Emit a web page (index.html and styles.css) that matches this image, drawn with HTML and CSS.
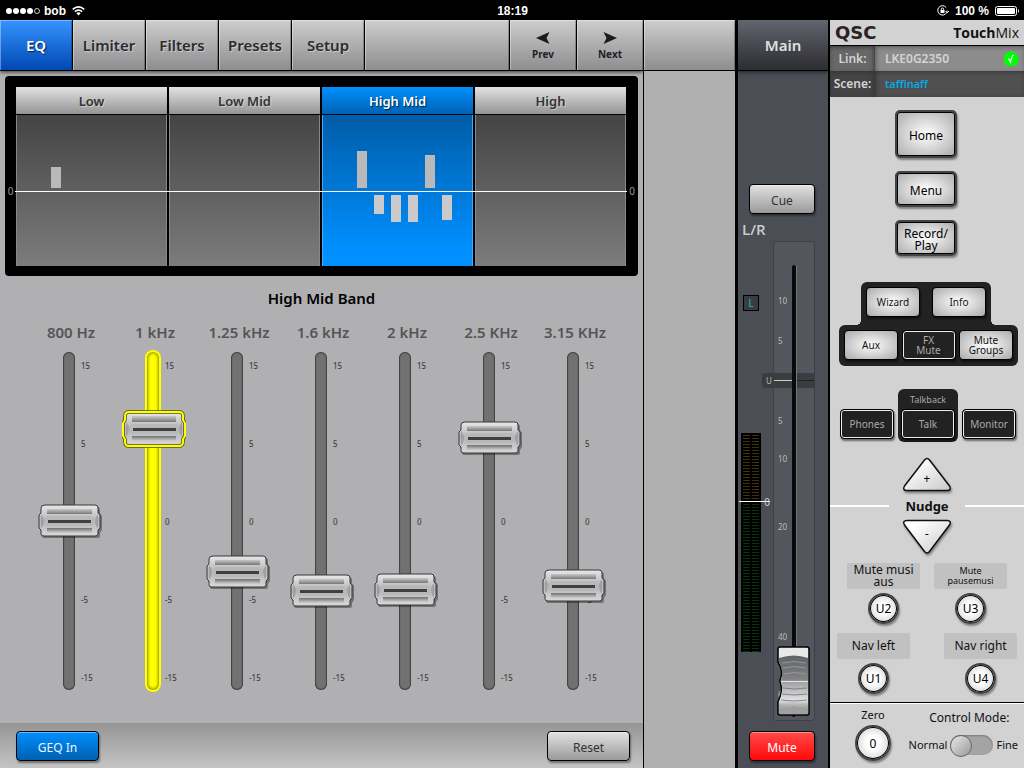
FILE: index.html
```
<!DOCTYPE html>
<html lang="en">
<head>
    <meta charset="UTF-8">
    <meta name="viewport" content="width=device-width, initial-scale=1.0">
    <title>TouchMix Control</title>
    <link rel="stylesheet" href="styles.css">
</head>
<body>

    <!-- Status Bar -->
    <header class="status">
        <div class="status-left">
            <svg width="35" height="8" viewBox="0 0 35 8" fill="#fff"><circle cx="4" cy="4" r="3"/><circle cx="11" cy="4" r="3"/><circle cx="18" cy="4" r="3"/><circle cx="25" cy="4" r="3"/><circle cx="32" cy="4" r="2.5" fill="none" stroke="#fff" stroke-width="0.8"/></svg>
            <span>bob</span>
            <svg class="wifi" width="13" height="10" viewBox="0 0 13 10" fill="none" stroke="#fff" stroke-width="1.6"><path d="M0.7 3.3Q6.5 -1.6 12.3 3.3M2.8 5.6Q6.5 2.5 10.2 5.6"/><path d="M4.3 7.2Q6.5 5.4 8.7 7.2L6.5 9.6Z" fill="#fff" stroke="none"/></svg>
        </div>
        <span class="clock">18:19</span>
        <div class="status-right">
            <svg width="12" height="12" viewBox="0 0 12 12" fill="none" stroke="#fff"><path d="M9.2 2.5A4.7 4.7 0 1 0 10.2 5.5M8.5 6L10.2 7.8L11.8 6"/><rect x="3.5" y="5" width="4" height="3" fill="#fff" stroke="none"/><path d="M4.3 5.2V4.2A1.2 1.2 0 0 1 6.7 4.2V5.2"/></svg>
            <span>100 %</span>
            <svg width="25" height="10" viewBox="0 0 25 10"><rect x="0.5" y="0.5" width="21" height="9" rx="2" fill="none" stroke="#fff"/><rect x="2" y="2" width="18" height="6" rx="1" fill="#fff"/><path d="M23 3Q25 5 23 7Z" fill="#fff"/></svg>
        </div>
    </header>

    <div class="mixer">

        <!-- EQ Page -->
        <main class="eq">
            <nav class="tabs">
                <button class="tab active">EQ</button>
                <button class="tab">Limiter</button>
                <button class="tab">Filters</button>
                <button class="tab">Presets</button>
                <button class="tab">Setup</button>
                <span class="tab-fill"></span>
                <button class="step"><svg width="14" height="12" viewBox="0 0 14 12"><path d="M0 6L13.5 0L10.5 6L13.5 12Z"/></svg>Prev</button>
                <button class="step"><svg width="14" height="12" viewBox="0 0 14 12"><path d="M14 6L0.5 0L3.5 6L0.5 12Z"/></svg>Next</button>
            </nav>

            <section class="graph">
                <span class="zero-mark">0</span>
                <div class="bands">
                    <div class="band">
                        <button class="band-name">Low</button>
                        <div class="band-plot">
                            <i class="bar"></i>
                            <i class="bar up" style="height: 21px"></i>
                        </div>
                    </div>
                    <div class="band">
                        <button class="band-name">Low Mid</button>
                        <div class="band-plot"></div>
                    </div>
                    <div class="band active">
                        <button class="band-name">High Mid</button>
                        <div class="band-plot">
                            <i class="bar"></i>
                            <i class="bar up" style="height: 37px"></i>
                            <i class="bar down" style="height: 19px"></i>
                            <i class="bar down" style="height: 27px"></i>
                            <i class="bar down" style="height: 27px"></i>
                            <i class="bar up" style="height: 33px"></i>
                            <i class="bar down" style="height: 25px"></i>
                        </div>
                    </div>
                    <div class="band">
                        <button class="band-name">High</button>
                        <div class="band-plot"></div>
                    </div>
                    <div class="zero-line"></div>
                </div>
                <span class="zero-mark">0</span>
            </section>

            <h2 class="band-title">High Mid Band</h2>

            <section class="faders">
                <div class="fader">
                    <label for="f800">800 Hz</label>
                    <div class="fader-body">
                        <input type="range" id="f800" min="-15" max="15" step="0.1" value="0">
                        <div class="scale"><span>15</span><span>5</span><span>0</span><span>-5</span><span>-15</span></div>
                    </div>
                </div>
                <div class="fader selected">
                    <label for="f1k">1 kHz</label>
                    <div class="fader-body">
                        <input type="range" id="f1k" min="-15" max="15" step="0.1" value="9.2">
                        <div class="scale"><span>15</span><span>5</span><span>0</span><span>-5</span><span>-15</span></div>
                    </div>
                </div>
                <div class="fader">
                    <label for="f1k25">1.25 kHz</label>
                    <div class="fader-body">
                        <input type="range" id="f1k25" min="-15" max="15" step="0.1" value="-5.1">
                        <div class="scale"><span>15</span><span>5</span><span>0</span><span>-5</span><span>-15</span></div>
                    </div>
                </div>
                <div class="fader">
                    <label for="f1k6">1.6 kHz</label>
                    <div class="fader-body">
                        <input type="range" id="f1k6" min="-15" max="15" step="0.1" value="-7">
                        <div class="scale"><span>15</span><span>5</span><span>0</span><span>-5</span><span>-15</span></div>
                    </div>
                </div>
                <div class="fader">
                    <label for="f2k">2 kHz</label>
                    <div class="fader-body">
                        <input type="range" id="f2k" min="-15" max="15" step="0.1" value="-6.9">
                        <div class="scale"><span>15</span><span>5</span><span>0</span><span>-5</span><span>-15</span></div>
                    </div>
                </div>
                <div class="fader">
                    <label for="f2k5">2.5 KHz</label>
                    <div class="fader-body">
                        <input type="range" id="f2k5" min="-15" max="15" step="0.1" value="8.3">
                        <div class="scale"><span>15</span><span>5</span><span>0</span><span>-5</span><span>-15</span></div>
                    </div>
                </div>
                <div class="fader">
                    <label for="f3k15">3.15 KHz</label>
                    <div class="fader-body">
                        <input type="range" id="f3k15" min="-15" max="15" step="0.1" value="-6.5">
                        <div class="scale"><span>15</span><span>5</span><span>0</span><span>-5</span><span>-15</span></div>
                    </div>
                </div>
            </section>

            <footer class="eq-footer">
                <button class="btn wide blue">GEQ In</button>
                <button class="btn wide">Reset</button>
            </footer>
        </main>

        <div class="spare"><div class="spare-head"></div></div>

        <!-- Main Output Strip -->
        <section class="strip">
            <h2 class="strip-head">Main</h2>
            <div class="strip-body">
                <button class="btn">Cue</button>
                <label class="strip-name" for="main-level">L/R</label>
                <div class="strip-level">
                    <div class="meter-col">
                        <button class="link-l">L</button>
                        <div class="meter"><span class="meter-zero">0</span></div>
                    </div>
                    <div class="slot">
                        <span class="mark" style="top: 59px">10</span>
                        <span class="mark" style="top: 99px">5</span>
                        <span class="mark" style="top: 179px">5</span>
                        <span class="mark" style="top: 217px">10</span>
                        <span class="mark" style="top: 285px">20</span>
                        <span class="mark" style="top: 395px">40</span>
                        <span class="mark" style="top: 453px">60</span>
                        <span class="unity">U</span>
                        <input type="range" id="main-level" min="0" max="100" value="0">
                    </div>
                </div>
                <button class="btn red">Mute</button>
            </div>
        </section>

        <!-- Side Panel -->
        <aside class="side">
            <div class="brand">
                <span class="logo">QSC</span>
                <span class="product"><b>Touch</b>Mix</span>
            </div>
            <div class="info">
                <span class="info-name">Link:</span>
                <span class="info-value">LKE0G2350
                    <svg width="16" height="16" viewBox="0 0 16 16"><circle cx="8" cy="8" r="7.5" fill="#0f0"/><path d="M5 8.5L6 8L7.3 11.5L9.5 4.5H11" fill="none" stroke="#e8ffe8" stroke-width="1.2"/></svg>
                </span>
            </div>
            <div class="info dark">
                <span class="info-name">Scene:</span>
                <span class="info-value scene">taffinaff</span>
            </div>

            <div class="nav-keys">
                <button class="key tall">Home</button>
                <button class="key">Menu</button>
                <button class="key">Record/<br>Play</button>
            </div>

            <div class="cluster">
                <div class="cluster-top">
                    <button class="pad lit">Wizard</button>
                    <button class="pad lit">Info</button>
                </div>
                <div class="cluster-bottom">
                    <button class="pad lit">Aux</button>
                    <button class="pad">FX<br>Mute</button>
                    <button class="pad lit">Mute<br>Groups</button>
                </div>
            </div>

            <div class="talk-row">
                <button class="pad">Phones</button>
                <div class="talkback">
                    <span>Talkback</span>
                    <button class="pad">Talk</button>
                </div>
                <button class="pad">Monitor</button>
            </div>

            <div class="nudge">
                <button class="nudge-btn">
                    <svg width="50" height="36" viewBox="0 0 50 36"><path d="M22.5 3Q25 0 27.5 3L47.5 29Q50 33.500 45 33.500H5Q0 33.500 2.500 29Z" fill="url(#shine)" stroke="#111" stroke-width="1.500"/></svg>
                    <span class="plus">+</span>
                </button>
                <h3 class="nudge-title">Nudge</h3>
                <button class="nudge-btn">
                    <svg width="50" height="36" viewBox="0 0 50 36"><path d="M22.5 32.500Q25 35.500 27.5 32.500L47.5 6Q50 1.500 45 1.500H5Q0 1.500 2.500 6Z" fill="url(#shine)" stroke="#111" stroke-width="1.500"/></svg>
                    <span class="minus">-</span>
                </button>
                <svg class="defs" width="0" height="0"><defs><linearGradient id="shine" x1="0" y1="0" x2="1" y2="1"><stop offset="0.2" stop-color="#fff"/><stop offset="1" stop-color="#c8c8c8"/></linearGradient></defs></svg>
            </div>

            <div class="user-keys">
                <div class="user"><label for="u2">Mute musi<br>aus</label><button class="round" id="u2">U2</button></div>
                <div class="user"><label class="small" for="u3">Mute<br>pausemusi</label><button class="round" id="u3">U3</button></div>
            </div>
            <div class="user-keys spread">
                <div class="user"><label for="u1">Nav left</label><button class="round" id="u1">U1</button></div>
                <div class="user"><label for="u4">Nav right</label><button class="round" id="u4">U4</button></div>
            </div>

            <div class="side-footer">
                <div class="zero">
                    <label for="zero">Zero</label>
                    <button class="round big" id="zero">0</button>
                </div>
                <div class="mode">
                    <label for="mode">Control Mode:</label>
                    <div class="mode-row">
                        <span>Normal</span>
                        <input type="checkbox" id="mode" class="switch">
                        <span>Fine</span>
                    </div>
                </div>
            </div>
        </aside>
    </div>

</body>
</html>
```
FILE: styles.css
```
/* Basic Styling */
* {
    box-sizing: border-box;
}

body {
    margin: 0;
    min-height: 100vh;
    display: flex;
    flex-direction: column;
    font-family: "Noto Sans", sans-serif;
    font-size: 12px;
    color: #111;
    background-color: #000;
}

button {
    font-family: inherit;
    padding: 0;
    border: none;
    cursor: pointer;
}

h2, h3 {
    margin: 0;
}

/* Status Bar */
.status {
    display: grid;
    grid-template-columns: 1fr auto 1fr;
    align-items: center;
    height: 20px;
    padding: 2px 4px 0 5px;
    font-family: "Liberation Sans", Arial, sans-serif;
    font-size: 12px;
    font-weight: bold;
    color: #fff;
}

.status-left, .status-right {
    display: flex;
    align-items: center;
    gap: 4px;
}

.status-right {
    justify-content: flex-end;
    gap: 6px;
}

.wifi {
    margin-left: 2px;
}

.mixer {
    flex: 1;
    display: grid;
    grid-template-columns: 1fr 92px 95px 194px;
}

/* EQ Page */
.eq {
    display: flex;
    flex-direction: column;
    background-color: #b0b0b2;
}

.tabs {
    display: flex;
    gap: 1px;
    height: 51px;
    border-bottom: 1px solid #000;
    background-color: #000;
    box-shadow: 0 1px 4px rgba(0, 0, 0, 0.7);
}

.tab, .step, .tab-fill, .spare-head {
    background: linear-gradient(#cdcdcd, #8e8e90);
    box-shadow: inset 1px 1px 0 rgba(255, 255, 255, 0.35), inset -1px 0 0 rgba(0, 0, 0, 0.25);
}

.tab {
    width: 72px;
    font-size: 15px;
    font-weight: 600;
    color: #2c2c2e;
    text-shadow: 1px 1px 0 rgba(255, 255, 255, 0.4);
}

.tab.active {
    color: #fff;
    background: linear-gradient(#3694ff, #0048b4);
    text-shadow: 1px 1px 1px #002050;
}

.tab-fill {
    flex: 1;
}

.step {
    width: 66px;
    display: flex;
    flex-direction: column;
    align-items: center;
    justify-content: center;
    gap: 3px;
    padding-top: 2px;
    font-size: 10px;
    font-weight: bold;
    color: #222;
}

.step svg {
    fill: #1c1c20;
}

/* Band Graph */
.graph {
    display: grid;
    grid-template-columns: 11px 1fr 12px;
    align-items: center;
    height: 200px;
    margin: 5px 5px 0;
    border-radius: 4px;
    background-color: #000;
}

.zero-mark {
    padding-top: 30px;
    text-align: center;
    font-size: 10px;
    color: #999;
}

.bands {
    position: relative;
    display: grid;
    grid-template-columns: repeat(4, 1fr);
    gap: 2px;
}

.band {
    display: flex;
    flex-direction: column;
    gap: 1px;
}

.band-name {
    height: 27px;
    padding-top: 2px;
    font-size: 13px;
    font-weight: 600;
    color: #333;
    background: linear-gradient(#e2e2e2, #949494);
    text-shadow: 1px 1px 0 rgba(255, 255, 255, 0.4);
}

.band-plot {
    display: flex;
    gap: 7px;
    height: 151px;
    padding-left: 18px;
    background: linear-gradient(#444, #7c7c7c);
    box-shadow: inset 1px 0 0 #888, inset -1px 0 0 #888;
}

.band.active .band-name {
    color: #fff;
    background: linear-gradient(#0090ff, #0062b4);
    text-shadow: 1px 1px 1px #002050;
}

.band.active .band-plot {
    background: linear-gradient(#005ca8, #0090ff 90%);
    box-shadow: inset 1px 0 0 #48a8f8, inset -1px 0 0 #48a8f8;
}

.bar {
    width: 10px;
}

.bar.up {
    align-self: flex-end;
    margin-bottom: 78px;
    background: #b9b9bc;
}

.bar.down {
    margin-top: 80px;
    background: #cacacc;
}

.zero-line {
    position: absolute;
    top: 104px;
    left: -1px;
    right: -1px;
    height: 1px;
    background-color: #fff;
}

.band-title {
    margin-top: 12px;
    line-height: 20px;
    text-align: center;
    font-size: 15px;
    font-weight: 600;
    color: #000;
}

/* Faders */
.faders {
    flex: 1;
    display: grid;
    grid-template-columns: repeat(7, 1fr);
    padding: 14px 28px 0 27px;
}

.fader {
    display: flex;
    flex-direction: column;
    align-items: center;
    gap: 10px;
}

.fader label {
    padding-left: 4px;
    line-height: 20px;
    white-space: nowrap;
    font-size: 15px;
    font-weight: 600;
    color: #555;
}

.fader-body {
    display: grid;
    grid-template-columns: 1fr 64px 1fr;
}

.fader-body input {
    grid-area: 1 / 2;
    z-index: 1;
}

.scale {
    grid-area: 1 / 2;
    display: flex;
    flex-direction: column;
    justify-content: space-between;
    padding: 8px 0 6px 44px;
    line-height: 12px;
    font-size: 8px;
    font-weight: 500;
    color: #444;
}

input[type="range"] {
    -webkit-appearance: none;
    appearance: none;
    writing-mode: vertical-lr;
    direction: rtl;
    width: 64px;
    height: 338px;
    margin: 0;
    background: none;
}

.fader input::-webkit-slider-runnable-track {
    width: 12px;
    height: 100%;
    border-radius: 6px;
    background: #717171;
    box-shadow: inset 0 0 1px 1px #404040;
}

.fader input::-webkit-slider-thumb {
    -webkit-appearance: none;
    width: 64px;
    height: 38px;
    margin-left: -25px;
    background: url("data:image/svg+xml,%3Csvg xmlns='http://www.w3.org/2000/svg' width='64' height='38'%3E%3Cdefs%3E%3ClinearGradient id='a' x2='0' y2='1'%3E%3Cstop stop-color='%23e8e8ea'/%3E%3Cstop offset='.5' stop-color='%23b4b4b6'/%3E%3Cstop offset='1' stop-color='%23d8d8da'/%3E%3C/linearGradient%3E%3ClinearGradient id='b' x2='0' y2='1'%3E%3Cstop stop-color='%23c8c8ca'/%3E%3Cstop offset='1' stop-color='%23777'/%3E%3C/linearGradient%3E%3ClinearGradient id='c' x2='0' y2='1'%3E%3Cstop stop-color='%23707070'/%3E%3Cstop offset='1' stop-color='%23d0d0d2'/%3E%3C/linearGradient%3E%3C/defs%3E%3Cpath d='M7 5H59Q62 5 62 8V11L64 14V28L62 31V34Q62 36 59 36H7Q4 36 4 34V31L2 28V14L4 11V8Q4 5 7 5Z' fill='%23000' opacity='.35'/%3E%3Cpath d='M7 3H57Q60 3 60 6V11L62 13V26L60 28V32Q60 34 57 34H6Q3 34 3 32V28L1 26V13L3 11V6Q3 3 7 3Z' fill='url(%23a)' stroke='%23383838'/%3E%3Cpath d='M3 12Q9 19 3 27ZM60 12Q54 19 60 27Z' fill='%23a0a0a2'/%3E%3Crect x='9' y='7' width='45' height='5' fill='url(%23b)'/%3E%3Crect x='9' y='26' width='45' height='5' fill='url(%23c)'/%3E%3Cpath d='M9 14H54L57 19L54 24H9L6 19Z' fill='%23b8b8ba'/%3E%3Crect x='10' y='18' width='43' height='3' fill='%23404040'/%3E%3C/svg%3E") no-repeat;
}

.fader.selected input::-webkit-slider-runnable-track {
    background: #ff0;
    box-shadow: 0 0 0 2px #ff0, inset 0 0 3px 1px #8a8a00;
}

.fader.selected input::-webkit-slider-thumb {
    background: url("data:image/svg+xml,%3Csvg xmlns='http://www.w3.org/2000/svg' width='64' height='38'%3E%3Cdefs%3E%3ClinearGradient id='a' x2='0' y2='1'%3E%3Cstop stop-color='%23e8e8ea'/%3E%3Cstop offset='.5' stop-color='%23b4b4b6'/%3E%3Cstop offset='1' stop-color='%23d8d8da'/%3E%3C/linearGradient%3E%3ClinearGradient id='b' x2='0' y2='1'%3E%3Cstop stop-color='%23c8c8ca'/%3E%3Cstop offset='1' stop-color='%23777'/%3E%3C/linearGradient%3E%3ClinearGradient id='c' x2='0' y2='1'%3E%3Cstop stop-color='%23707070'/%3E%3Cstop offset='1' stop-color='%23d0d0d2'/%3E%3C/linearGradient%3E%3C/defs%3E%3Cpath d='M7 2H57Q61 2 61 6V10L63 13V26L61 29V32Q61 36 57 36H7Q3 36 3 32V29L1 26V13L3 10V6Q3 2 7 2Z' fill='url(%23a)' stroke='%23555500' stroke-width='3.5'/%3E%3Cpath d='M7 2H57Q61 2 61 6V10L63 13V26L61 29V32Q61 36 57 36H7Q3 36 3 32V29L1 26V13L3 10V6Q3 2 7 2Z' fill='none' stroke='%23ff0' stroke-width='2'/%3E%3Cpath d='M4 12Q10 19 4 27ZM60 12Q54 19 60 27Z' fill='%23a0a0a2'/%3E%3Crect x='10' y='6' width='44' height='6' fill='url(%23b)'/%3E%3Crect x='10' y='26' width='44' height='5' fill='url(%23c)'/%3E%3Cpath d='M10 14H54L57 19L54 24H10L7 19Z' fill='%23b8b8ba'/%3E%3Crect x='11' y='18' width='43' height='3' fill='%23404040'/%3E%3C/svg%3E") no-repeat;
}

.eq-footer {
    display: flex;
    justify-content: space-between;
    align-items: flex-start;
    height: 45px;
    padding: 8px 13px 0 16px;
    background: linear-gradient(#959595, #c4c4c4);
}

/* Buttons */
.btn {
    height: 30px;
    width: 66px;
    padding-top: 2px;
    border: 1px solid #000;
    border-radius: 4px;
    font-size: 12px;
    color: #333;
    background: linear-gradient(#e2e2e2, #9a9a9a);
    box-shadow: inset 0 1px 0 rgba(255, 255, 255, 0.4), 1px 2px 2px rgba(0, 0, 0, 0.4);
}

.btn.wide {
    width: 83px;
}

.btn.blue {
    color: #e8f4ff;
    background: linear-gradient(#0090ff, #0060b0);
}

.btn.red {
    color: #fff;
    background: linear-gradient(#ff4a4a, #ff0a0a);
}

/* Spare Column */
.spare {
    border-left: 1px solid #000;
    background-color: #b0b0b0;
}

.spare-head {
    height: 51px;
    border-bottom: 1px solid #000;
}

/* Main Output Strip */
.strip {
    display: flex;
    flex-direction: column;
    border-left: 3px solid #000;
    border-right: 2px solid #000;
    background-color: #4b4e55;
}

.strip-head {
    height: 51px;
    border-bottom: 1px solid #000;
    line-height: 50px;
    text-align: center;
    font-size: 15px;
    font-weight: 600;
    color: #e0e0e0;
    background: linear-gradient(#62656e, #2c2d31);
    box-shadow: 0 1px 4px rgba(0, 0, 0, 0.6);
}

.strip-body {
    flex: 1;
    display: flex;
    flex-direction: column;
    justify-content: flex-end;
    align-items: center;
    padding: 0 13px 7px 3px;
}

.strip-body .btn {
    margin-left: 8px;
}

.strip-name {
    align-self: flex-start;
    margin-top: 5px;
    line-height: 20px;
    padding-left: 1px;
    font-family: "Open Sans", sans-serif;
    font-size: 15px;
    font-weight: 600;
    color: #ccc;
}

.strip-level {
    align-self: stretch;
    display: grid;
    grid-template-columns: 32px 1fr;
    height: 480px;
    margin: 2px 0 10px;
}

.link-l {
    display: block;
    width: 16px;
    height: 16px;
    margin: 54px 0 122px 2px;
    border: 1px solid #000;
    line-height: 12px;
    font-size: 10px;
    color: #1cb8cc;
    background-color: #3a3c40;
}

.meter {
    position: relative;
    width: 20px;
    height: 219px;
    background:
        linear-gradient(90deg, #000 2px, transparent 2px 9px, #000 9px 11px, transparent 11px 18px, #000 18px),
        repeating-linear-gradient(#000 0 2px, transparent 2px 3px),
        linear-gradient(#42340a 68px, #083410 68px);
}

.meter-zero {
    position: absolute;
    top: 68px;
    left: -2px;
    width: 31px;
    border-top: 1px solid #fff;
    text-align: right;
    line-height: 0;
    font-size: 10px;
    color: #ccc;
}

.slot {
    position: relative;
    padding-top: 23px;
    border: 1px solid #3e4046;
    border-radius: 3px;
    background-color: #53565d;
}

.slot input {
    position: relative;
    display: block;
    width: 40px;
    height: 452px;
}

.slot input::-webkit-slider-runnable-track {
    width: 4px;
    height: 100%;
    border-radius: 2px;
    background: #0a0a0a;
    box-shadow: 1px 0 0 #777;
}

.slot input::-webkit-slider-thumb {
    -webkit-appearance: none;
    width: 34px;
    height: 71px;
    margin-left: -15px;
    background: url("data:image/svg+xml,%3Csvg xmlns='http://www.w3.org/2000/svg' width='34' height='71'%3E%3Cdefs%3E%3ClinearGradient id='a' x2='0' y2='1'%3E%3Cstop stop-color='%23606468'/%3E%3Cstop offset='.45' stop-color='%23808284'/%3E%3Cstop offset='.5' stop-color='%23a0a0a2'/%3E%3Cstop offset='.85' stop-color='%23e0e0e2'/%3E%3Cstop offset='1' stop-color='%23999'/%3E%3C/linearGradient%3E%3C/defs%3E%3Cpath d='M3 1H30Q32 1 32 3V67Q32 69 30 69H3Q1 69 1 67V56Q7 44 3 36V34Q7 26 1 16V3Q1 1 3 1Z' fill='%23e8e8e8' stroke='%23000' stroke-width='1.5'/%3E%3Cpath d='M2 12Q17 7 31 12V62Q17 58 2 62V56Q7 44 4 36V34Q7 26 2 16Z' fill='url(%23a)'/%3E%3Cpath d='M2 62Q17 58 31 62V68H2Z' fill='%23a0a0a0'/%3E%3Cpath d='M5 17Q17 14 29 17M6 22Q17 19 29 22M7 28Q17 25 29 28' fill='none' stroke='%23a0a2a4' stroke-width='.8'/%3E%3Cpath d='M4 35.5H31' stroke='%23e4e4e4'/%3E%3Cpath d='M6 42Q17 44 30 42M5 48Q17 50 30 48M4 54Q17 56 30 54' fill='none' stroke='%23707274' stroke-width='.8'/%3E%3C/svg%3E") no-repeat;
}

.mark {
    position: absolute;
    left: 4px;
    line-height: 0;
    font-size: 8px;
    color: #bbb;
}

.unity {
    position: absolute;
    top: 131px;
    left: -12px;
    right: -1px;
    height: 15px;
    padding-left: 4px;
    border-radius: 3px;
    line-height: 15px;
    font-size: 8px;
    color: #bbb;
    background: linear-gradient(#ccc, #ccc) 12px 7px / 19px 1px no-repeat, linear-gradient(#222, #222) 31px 7px / 21px 1px no-repeat, #3a3c40;
}

/* Side Panel */
.side {
    display: flex;
    flex-direction: column;
    background-color: #d2d2d2;
}

.brand {
    display: flex;
    justify-content: space-between;
    align-items: center;
    height: 26px;
    padding: 0 5px;
    border-bottom: 1px solid #000;
}

.logo {
    font-family: "DejaVu Sans", sans-serif;
    font-size: 18px;
    font-weight: bold;
    line-height: 24px;
    color: #2a2226;
}

.product {
    font-family: "Open Sans", sans-serif;
    font-size: 14px;
}

.info {
    display: grid;
    grid-template-columns: 45px 1fr;
    height: 25px;
    border-bottom: 1px solid #000;
    line-height: 26px;
    font-size: 12px;
    font-weight: 600;
    color: #d4d4d4;
}

.info-name {
    text-align: center;
    background-color: #686868;
    box-shadow: inset -1px 1px 4px #333;
}

.info-value {
    display: flex;
    justify-content: space-between;
    align-items: center;
    padding: 0 5px 0 10px;
    background-color: #8c8c8c;
    box-shadow: inset 1px 1px 4px #555;
}

.info.dark .info-name {
    background-color: #444;
}

.info.dark .info-value {
    font-family: "Open Sans", sans-serif;
    font-size: 11px;
    color: #00aeef;
    background-color: #505050;
    box-shadow: inset 1px 1px 4px #333;
}

.nav-keys {
    display: flex;
    flex-direction: column;
    align-items: center;
    gap: 13px;
    padding: 14px 2px 0 0;
}

.key {
    width: 62px;
    height: 36px;
    padding-top: 3px;
    border: 2px solid #444;
    border-radius: 5px;
    line-height: 12px;
    font-size: 12px;
    background: radial-gradient(#fff, #aaa);
    box-shadow: inset 0 0 0 1px #000, 1px 2px 2px rgba(0, 0, 0, 0.4);
}

.key.tall {
    height: 48px;
}

/* Dark Pads */
.cluster {
    margin: 26px 6px 0 9px;
}

.cluster-top, .cluster-bottom {
    display: flex;
    justify-content: space-between;
    border-radius: 6px;
    padding: 5px;
    background-color: #222;
}

.cluster-top {
    position: relative;
    height: 43px;
    margin: 0 27px 0 22px;
    border-radius: 6px 6px 0 0;
}

/* Inner corners where the two rows meet */
.cluster-top::before, .cluster-top::after {
    content: "";
    position: absolute;
    bottom: 0;
    width: 5px;
    height: 5px;
}

.cluster-top::before {
    right: 100%;
    background: radial-gradient(circle at 0 0, transparent 5px, #222 5px);
}

.cluster-top::after {
    left: 100%;
    background: radial-gradient(circle at 100% 0, transparent 5px, #222 5px);
}

.cluster-bottom {
    height: 41px;
}

.pad {
    width: 54px;
    height: 30px;
    border: 1px solid #000;
    border-radius: 4px;
    line-height: 10px;
    font-size: 10px;
    color: #aaa;
    background-color: #222;
    box-shadow: inset 0 0 0 1px #eee, 1px 2px 2px rgba(0, 0, 0, 0.5);
}

.pad.lit {
    color: #111;
    background: radial-gradient(#fff, #aaa);
    box-shadow: 1px 2px 2px rgba(0, 0, 0, 0.5);
}

.talk-row {
    display: flex;
    justify-content: space-between;
    align-items: flex-end;
    margin: 23px 8px 0 10px;
}

.talk-row > .pad {
    margin-bottom: 3px;
}

.talkback {
    display: flex;
    flex-direction: column;
    align-items: center;
    gap: 3px;
    padding: 4px 3px 3px;
    border-radius: 6px;
    line-height: 13px;
    font-size: 9px;
    color: #aaa;
    background-color: #222;
}

/* Nudge */
.nudge {
    display: flex;
    flex-direction: column;
    align-items: center;
    margin-top: 15px;
}

.nudge-btn {
    display: grid;
    place-items: center;
    font-size: 12px;
    background: none;
    filter: drop-shadow(1px 2px 1px rgba(0, 0, 0, 0.4));
}

.nudge-btn svg, .nudge-btn span {
    grid-area: 1 / 1;
}

.plus {
    padding-top: 6px;
}

.minus {
    padding-bottom: 8px;
}

.nudge-title {
    align-self: stretch;
    display: flex;
    align-items: center;
    gap: 16px;
    line-height: 26px;
    font-size: 13px;
}

.nudge-title::before, .nudge-title::after {
    content: "";
    flex: 1;
    height: 2px;
    background-color: #fff;
}

.defs {
    position: absolute;
}

/* User Keys */
.user-keys {
    display: flex;
    justify-content: space-between;
    margin: 8px 17px 0;
}

.user-keys.spread {
    margin: 9px 7px 0;
}

.user {
    display: flex;
    flex-direction: column;
    align-items: center;
    gap: 4px;
}

.user label {
    display: grid;
    place-items: center;
    width: 73px;
    height: 26px;
    border-radius: 2px;
    text-align: center;
    line-height: 12px;
    font-size: 12px;
    background-color: #c1c1c1;
}

.user label.small {
    line-height: 10px;
    font-size: 9px;
}

.round {
    width: 31px;
    height: 31px;
    border: 2px solid #444;
    border-radius: 50%;
    font-size: 12px;
    background: radial-gradient(#fff 30%, #c4c4c4);
    box-shadow: inset 0 0 0 1px #000, 1px 2px 2px rgba(0, 0, 0, 0.4);
}

.round.big {
    width: 36px;
    height: 36px;
}

.side-footer {
    flex: 1;
    display: flex;
    justify-content: space-between;
    align-items: flex-start;
    margin-top: 8px;
    padding: 4px 6px 0 25px;
    border-top: 1px solid #000;
    box-shadow: inset 0 1px 0 #fff;
}

.zero {
    display: flex;
    flex-direction: column;
    align-items: center;
    gap: 2px;
    line-height: 16px;
    font-size: 11px;
}

.mode {
    text-align: center;
    line-height: 22px;
    font-size: 12px;
}

.mode label {
    padding-left: 12px;
}

.mode-row {
    display: flex;
    align-items: center;
    gap: 3px;
    padding-top: 5px;
    font-size: 11px;
}

.switch {
    -webkit-appearance: none;
    appearance: none;
    width: 43px;
    height: 20px;
    margin: 0;
    border-radius: 10px;
    background-color: #a4a4a4;
    box-shadow: inset 0 1px 2px #777;
}

.switch::before {
    content: "";
    display: block;
    width: 20px;
    height: 20px;
    border: 1px solid #666;
    border-radius: 50%;
    background: linear-gradient(135deg, #e8e8e8, #999);
}

.switch:checked::before {
    margin-left: auto;
}
```
